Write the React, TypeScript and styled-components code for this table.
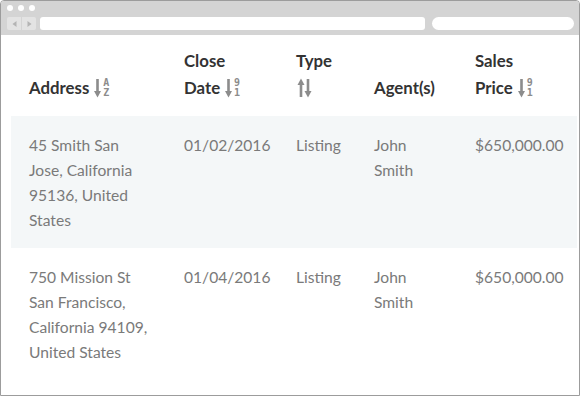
import styled, { createGlobalStyle } from "styled-components";

const GlobalStyle = createGlobalStyle`
    html, body {
        margin: 0;
        padding: 0;
        background: #ffffff;
    }
`;

const Frame = styled.div`
    width: 580px;
    height: 396px;
    box-sizing: border-box;
    border: 1px solid #9c9c9c;
    border-radius: 4px 4px 0 0;
    overflow: hidden;
    background: #ffffff;
    display: flex;
    flex-direction: column;
    font-family: Lato, "Open Sans", sans-serif;
`;

const Chrome = styled.div`
    background: #d4d4d4;
    height: 34px;
    box-sizing: border-box;
    padding: 4px 5px 0 6px;
    display: flex;
    flex-direction: column;
    gap: 6px;
`;

const Dots = styled.div`
    display: flex;
    gap: 5px;
`;

const Dot = styled.span`
    width: 6px;
    height: 6px;
    border-radius: 50%;
    background: #ffffff;
`;

const Toolbar = styled.div`
    display: flex;
    align-items: center;
    height: 13px;
`;

const NavGroup = styled.div`
    display: flex;
    gap: 1px;
    margin-right: 4px;
`;

const NavButton = styled.span<{ $side: "left" | "right" }>`
    width: 14px;
    height: 13px;
    background: #e3e3e3;
    display: flex;
    align-items: center;
    justify-content: center;
    border-radius: ${(p) => (p.$side === "left" ? "2px 0 0 2px" : "0 2px 2px 0")};
`;

const UrlBar = styled.div`
    width: 385px;
    height: 13px;
    background: #ffffff;
    border-radius: 3px;
    margin-right: 7px;
`;

const SearchBar = styled.div`
    width: 142px;
    height: 13px;
    background: #ffffff;
    border-radius: 7px;
`;

const Content = styled.div`
    padding-left: 10px;
`;

const Table = styled.table`
    width: 566px;
    table-layout: fixed;
    border-collapse: collapse;
`;

const HeadCell = styled.th`
    text-align: left;
    vertical-align: bottom;
    padding: 12px 18px 15px 18px;
    font-size: 16.8px;
    line-height: 27px;
    font-weight: 700;
    color: #333333;
`;

const Row = styled.tr<{ $striped?: boolean }>`
    background: ${(p) => (p.$striped ? "#f4f7f8" : "transparent")};
`;

const Cell = styled.td`
    vertical-align: top;
    padding: 17px 18px 15px 18px;
    font-size: 15.6px;
    line-height: 25px;
    color: #7a7a7a;
`;

const NoWrap = styled.span`
    white-space: nowrap;
`;

const SortIcon = styled.span`
    display: inline-flex;
    align-items: center;
    gap: 2px;
    margin-left: 5px;
    vertical-align: -4px;
    line-height: 10px;
`;

const Stack = styled.span`
    display: inline-flex;
    flex-direction: column;
    font-size: 10px;
    line-height: 10px;
    font-weight: 700;
    font-family: "DejaVu Sans Mono", monospace;
    color: #8c8c8c;
`;

const TypeIcon = styled.svg`
    margin-left: 1px;
    vertical-align: -4px;
`;

const ArrowDown = () => (
    <svg width="7" height="20" viewBox="0 0 7 20">
        <rect x="2.2" y="1" width="2.6" height="13" fill="#8c8c8c" />
        <path d="M0 13 L7 13 L3.5 19.5 Z" fill="#8c8c8c" />
    </svg>
);

const UpDown = () => (
    <TypeIcon width="16" height="20" viewBox="0 0 16 20">
        <rect x="2.7" y="6" width="2.6" height="13" fill="#8c8c8c" />
        <path d="M0.5 7 L7.5 7 L4 0.5 Z" fill="#8c8c8c" />
        <rect x="9.7" y="1" width="2.6" height="13" fill="#8c8c8c" />
        <path d="M7.5 13 L14.5 13 L11 19.5 Z" fill="#8c8c8c" />
    </TypeIcon>
);

function Sort({ top, bottom }: { top: string; bottom: string }) {
    return (
        <SortIcon>
            <ArrowDown />
            <Stack>
                <span>{top}</span>
                <span>{bottom}</span>
            </Stack>
        </SortIcon>
    );
}

const Tri = ({ dir }: { dir: "left" | "right" }) => (
    <svg width="5" height="6" viewBox="0 0 5 6">
        <path d={dir === "left" ? "M4.5 0 L4.5 6 L0.5 3 Z" : "M0.5 0 L0.5 6 L4.5 3 Z"} fill="#b4b4b4" />
    </svg>
);

const sales = [
    {
        address: "45 Smith San Jose, California 95136, United States",
        date: "01/02/2016",
        type: "Listing",
        agent: "John Smith",
        price: "$650,000.00",
    },
    {
        address: "750 Mission St San Francisco, California 94109, United States",
        date: "01/04/2016",
        type: "Listing",
        agent: "John Smith",
        price: "$650,000.00",
    },
];

export default function App() {
    return (
        <>
            <GlobalStyle />
            <Frame>
                <Chrome>
                    <Dots>
                        <Dot />
                        <Dot />
                        <Dot />
                    </Dots>
                    <Toolbar>
                        <NavGroup>
                            <NavButton $side="left"><Tri dir="left" /></NavButton>
                            <NavButton $side="right"><Tri dir="right" /></NavButton>
                        </NavGroup>
                        <UrlBar />
                        <SearchBar />
                    </Toolbar>
                </Chrome>
                <Content>
                    <Table>
                        <colgroup>
                            <col style={{ width: 155 }} />
                            <col style={{ width: 112 }} />
                            <col style={{ width: 78 }} />
                            <col style={{ width: 101 }} />
                            <col style={{ width: 120 }} />
                        </colgroup>
                        <thead>
                            <tr>
                                <HeadCell>
                                    <NoWrap>Address<Sort top="A" bottom="Z" /></NoWrap>
                                </HeadCell>
                                <HeadCell>
                                    Close <NoWrap>Date<Sort top="9" bottom="1" /></NoWrap>
                                </HeadCell>
                                <HeadCell>
                                    Type <UpDown />
                                </HeadCell>
                                <HeadCell>Agent(s)</HeadCell>
                                <HeadCell>
                                    Sales <NoWrap>Price<Sort top="9" bottom="1" /></NoWrap>
                                </HeadCell>
                            </tr>
                        </thead>
                        <tbody>
                            {sales.map((s, i) => (
                                <Row key={i} $striped={i % 2 === 0}>
                                    <Cell>{s.address}</Cell>
                                    <Cell><NoWrap>{s.date}</NoWrap></Cell>
                                    <Cell>{s.type}</Cell>
                                    <Cell>{s.agent}</Cell>
                                    <Cell><NoWrap>{s.price}</NoWrap></Cell>
                                </Row>
                            ))}
                        </tbody>
                    </Table>
                </Content>
            </Frame>
        </>
    );
}
